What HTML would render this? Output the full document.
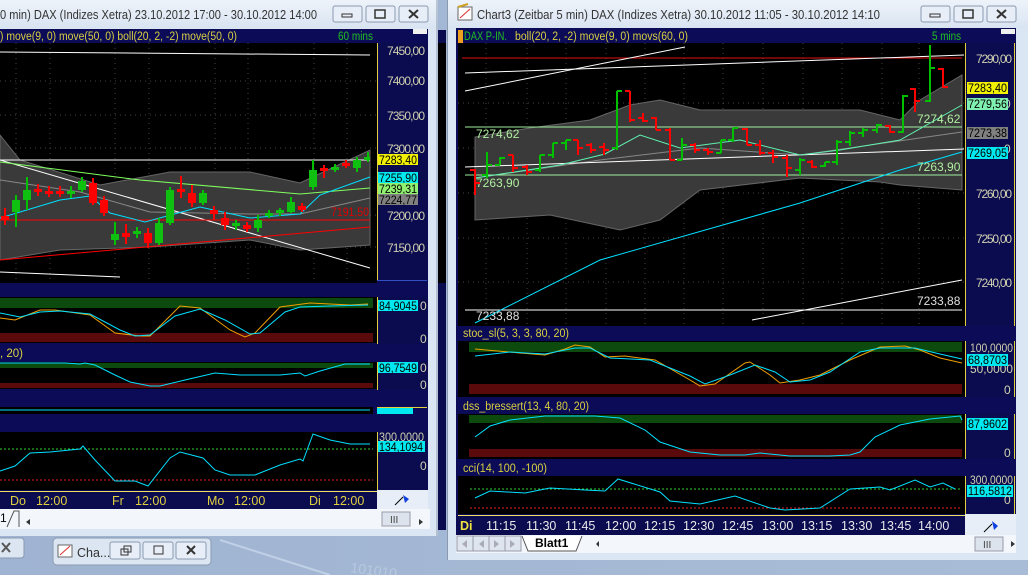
<!DOCTYPE html>
<html><head><meta charset="utf-8"><style>
body{margin:0;width:1028px;height:575px;overflow:hidden;background:#a3b8d5}
svg{display:block}
text{font-family:"Liberation Sans",sans-serif}
</style></head><body>
<svg width="1028" height="575" viewBox="0 0 1028 575" xmlns="http://www.w3.org/2000/svg">
<defs>
<linearGradient id="tb" x1="0" y1="0" x2="0" y2="1"><stop offset="0" stop-color="#eef3fa"/><stop offset="1" stop-color="#d9e4f2"/></linearGradient>
<linearGradient id="desk" x1="0" y1="0" x2="1" y2="0"><stop offset="0" stop-color="#9fb4d2"/><stop offset="1" stop-color="#a9bcd7"/></linearGradient>
</defs>
<rect x="0" y="0" width="1028" height="575" fill="url(#desk)"/>
<path d="M220 540 L330 575" stroke="#c0d0e6" stroke-width="2"/>
<text x="350" y="572" font-size="14" fill="#b8c8df" transform="rotate(8 350 572)">101010</text>

<!-- LEFT WINDOW -->
<rect x="0" y="0" width="438" height="536" fill="#dbe6f4"/>
<rect x="0" y="0" width="438" height="28" fill="url(#tb)"/>
<text x="0" y="19" font-size="12.5" fill="#333" textLength="317" lengthAdjust="spacingAndGlyphs">0 min)  DAX (Indizes Xetra) 23.10.2012 17:00 - 30.10.2012 14:00</text>
<g fill="#e8eef7" stroke="#8a9ab0">
<rect x="333" y="6" width="29" height="16" rx="2"/><rect x="366" y="6" width="29" height="16" rx="2"/><rect x="399" y="6" width="29" height="16" rx="2"/></g>
<rect x="342" y="14" width="10" height="3" fill="none" stroke="#333"/>
<rect x="375" y="10" width="10" height="8" fill="none" stroke="#333" stroke-width="1.5"/>
<path d="M409 10 L418 18 M418 10 L409 18" stroke="#333" stroke-width="2"/>
<line x1="437" y1="0" x2="437" y2="536" stroke="#8a9ab0"/>

<rect x="0" y="29" width="428" height="480" fill="#0b0b58"/>
<text x="0" y="40" font-size="11.5" fill="#d8d040" textLength="237" lengthAdjust="spacingAndGlyphs">) move(9, 0) move(50, 0) boll(20, 2, -2) move(50, 0)</text>
<text x="338" y="40" font-size="11.5" fill="#20c020" textLength="35" lengthAdjust="spacingAndGlyphs">60 mins</text>
<rect x="413" y="29" width="14" height="5" fill="#f0f0f0"/>
<rect x="0" y="43" width="377" height="240" fill="#000"/>
<g stroke="#444" stroke-dasharray="1,4">
<line x1="16" y1="43" x2="16" y2="283"/><line x1="50" y1="43" x2="50" y2="283"/><line x1="115" y1="43" x2="115" y2="283"/><line x1="149" y1="43" x2="149" y2="283"/><line x1="215" y1="43" x2="215" y2="283"/><line x1="248" y1="43" x2="248" y2="283"/><line x1="314" y1="43" x2="314" y2="283"/><line x1="347" y1="43" x2="347" y2="283"/>
<line x1="0" y1="81" x2="377" y2="81"/><line x1="0" y1="115" x2="377" y2="115"/><line x1="0" y1="148" x2="377" y2="148"/><line x1="0" y1="215" x2="377" y2="215"/><line x1="0" y1="247" x2="377" y2="247"/>
</g>
<path d="M0 135 L20 160 L100 185 L170 172 L250 172 L300 183 L370 150 L370 245 L300 250 L250 240 L150 247 L60 250 L0 260Z" fill="#3a3a3a" stroke="#666"/>
<polyline points="0,180 80,192 150,212 250,214 300,214 370,198" fill="none" stroke="#888"/>
<line x1="0" y1="52" x2="370" y2="55" stroke="#fff"/>
<line x1="0" y1="160" x2="370" y2="160" stroke="#fff"/>
<line x1="0" y1="160" x2="370" y2="268" stroke="#fff"/>
<line x1="0" y1="272" x2="120" y2="277" stroke="#fff"/>
<line x1="0" y1="220" x2="370" y2="220" stroke="#f00"/>
<line x1="0" y1="260" x2="370" y2="227" stroke="#f00"/>
<polyline points="0,162 140,180 300,194 370,188" fill="none" stroke="#80ff60"/>
<polyline points="0,218 60,200 90,196 110,213 145,222 200,207 250,218 300,214 320,195 370,177" fill="none" stroke="#00e0ff"/>
<text x="331" y="216" font-size="12" fill="#e00000" textLength="38" lengthAdjust="spacingAndGlyphs">7191,50</text>
<g stroke-width="2">
<g stroke="#f00"><line x1="5" y1="208" x2="5" y2="225"/><line x1="38" y1="184" x2="38" y2="196"/><line x1="49" y1="186" x2="49" y2="197"/><line x1="60" y1="186" x2="60" y2="197"/><line x1="93" y1="178" x2="93" y2="205"/><line x1="104" y1="196" x2="104" y2="216"/><line x1="126" y1="224" x2="126" y2="244"/><line x1="148" y1="228" x2="148" y2="248"/><line x1="181" y1="176" x2="181" y2="198"/><line x1="192" y1="185" x2="192" y2="207"/><line x1="214" y1="206" x2="214" y2="220"/><line x1="225" y1="212" x2="225" y2="230"/><line x1="247" y1="222" x2="247" y2="232"/><line x1="302" y1="203" x2="302" y2="212"/><line x1="324" y1="165" x2="324" y2="178"/><line x1="346" y1="160" x2="346" y2="168"/></g>
<g stroke="#00c000"><line x1="16" y1="195" x2="16" y2="227"/><line x1="27" y1="177" x2="27" y2="210"/><line x1="71" y1="186" x2="71" y2="198"/><line x1="82" y1="177" x2="82" y2="192"/><line x1="115" y1="222" x2="115" y2="245"/><line x1="137" y1="227" x2="137" y2="238"/><line x1="159" y1="218" x2="159" y2="245"/><line x1="170" y1="187" x2="170" y2="225"/><line x1="203" y1="190" x2="203" y2="205"/><line x1="236" y1="220" x2="236" y2="230"/><line x1="258" y1="215" x2="258" y2="232"/><line x1="269" y1="210" x2="269" y2="218"/><line x1="280" y1="208" x2="280" y2="216"/><line x1="291" y1="197" x2="291" y2="213"/><line x1="313" y1="160" x2="313" y2="190"/><line x1="335" y1="164" x2="335" y2="172"/><line x1="357" y1="157" x2="357" y2="172"/><line x1="368" y1="152" x2="368" y2="162"/></g>
</g>
<g fill="#f00"><rect x="1" y="216" width="8" height="4"/><rect x="34" y="189" width="8" height="3"/><rect x="45" y="191" width="8" height="3"/><rect x="56" y="191" width="8" height="3"/><rect x="89" y="183" width="8" height="20"/><rect x="100" y="200" width="8" height="13"/><rect x="122" y="233" width="8" height="4"/><rect x="144" y="233" width="8" height="10"/><rect x="177" y="189" width="8" height="3"/><rect x="188" y="193" width="8" height="10"/><rect x="210" y="210" width="8" height="4"/><rect x="221" y="218" width="8" height="7"/><rect x="243" y="225" width="8" height="4"/><rect x="298" y="206" width="8" height="4"/><rect x="320" y="168" width="8" height="3"/><rect x="342" y="163" width="8" height="3"/></g>
<g fill="#10c010"><rect x="12" y="200" width="8" height="12"/><rect x="23" y="190" width="8" height="10"/><rect x="67" y="191" width="8" height="3"/><rect x="78" y="181" width="8" height="9"/><rect x="111" y="234" width="8" height="6"/><rect x="133" y="231" width="8" height="3"/><rect x="155" y="223" width="8" height="20"/><rect x="166" y="190" width="8" height="33"/><rect x="199" y="193" width="8" height="10"/><rect x="232" y="223" width="8" height="3"/><rect x="254" y="220" width="8" height="8"/><rect x="265" y="213" width="8" height="3"/><rect x="276" y="210" width="8" height="3"/><rect x="287" y="202" width="8" height="10"/><rect x="309" y="170" width="8" height="17"/><rect x="331" y="167" width="8" height="3"/><rect x="353" y="160" width="8" height="8"/><rect x="364" y="157" width="6" height="3"/></g>

<!-- left axis -->
<rect x="377" y="43" width="50" height="237" fill="#0b0b50"/>
<line x1="377.5" y1="43" x2="377.5" y2="280" stroke="#e0d040"/>
<line x1="377" y1="280.5" x2="427" y2="280.5" stroke="#3050c0"/>
<g font-size="12" fill="#d0d0b0" lengthAdjust="spacingAndGlyphs"><text x="387" y="55" textLength="38">7450,00</text><text x="387" y="85" textLength="38">7400,00</text><text x="387" y="120" textLength="38">7350,00</text><text x="387" y="153" textLength="38">7300,00</text><text x="387" y="220" textLength="38">7200,00</text><text x="387" y="252" textLength="38">7150,00</text></g>
<rect x="378" y="154" width="40" height="11" fill="#f0f000"/><text x="379" y="164" font-size="12" fill="#000" textLength="38" lengthAdjust="spacingAndGlyphs">7283,40</text>
<rect x="378" y="172" width="40" height="11" fill="#00e8f0"/><text x="379" y="182" font-size="12" fill="#000" textLength="38" lengthAdjust="spacingAndGlyphs">7255,90</text>
<rect x="378" y="183" width="40" height="11" fill="#90f070"/><text x="379" y="193" font-size="12" fill="#000" textLength="38" lengthAdjust="spacingAndGlyphs">7239,31</text>
<rect x="378" y="194" width="40" height="11" fill="#808080"/><text x="379" y="204" font-size="12" fill="#000" textLength="38" lengthAdjust="spacingAndGlyphs">7224,77</text>

<!-- left stoc -->
<rect x="0" y="297" width="377" height="46" fill="#000"/>
<rect x="0" y="298" width="373" height="10" fill="#0d4a0d"/>
<rect x="0" y="333" width="373" height="9" fill="#5a0a0a"/>
<polyline points="0,318 15,320 40,310 55,310 90,315 115,333 140,336 150,336 180,306 200,308 230,330 245,337 255,333 280,307 310,303 350,305 368,304" fill="none" stroke="#f0a000"/>
<polyline points="0,313 20,317 40,312 60,311 90,314 120,330 135,336 150,335 175,316 200,309 225,320 250,334 260,333 285,312 300,307 330,306 368,305" fill="none" stroke="#00e0ff"/>
<rect x="377" y="297" width="50" height="47" fill="#0b0b50"/><line x1="377.5" y1="297" x2="377.5" y2="344" stroke="#e0d040"/>
<rect x="378" y="300" width="40" height="11" fill="#00e8f0"/><text x="379" y="310" font-size="12" fill="#000" textLength="38" lengthAdjust="spacingAndGlyphs">84,9045</text>
<text x="420" y="310" font-size="12" fill="#d0d0b0">0</text><text x="420" y="343" font-size="12" fill="#d0d0b0">0</text>
<text x="0" y="357" font-size="11.5" fill="#d8d040">, 20)</text>
<!-- left dss -->
<rect x="0" y="362" width="377" height="27" fill="#000"/>
<rect x="0" y="363" width="373" height="5" fill="#0d4a0d"/>
<rect x="0" y="383" width="373" height="5" fill="#5a0a0a"/>
<polyline points="0,363 65,363 80,364 85,363 95,365 115,375 130,382 150,386 160,386 185,380 215,373 240,375 280,375 300,373 305,376 320,371 345,364 370,364" fill="none" stroke="#00e0ff"/>
<rect x="377" y="362" width="50" height="28" fill="#0b0b50"/><line x1="377.5" y1="362" x2="377.5" y2="390" stroke="#e0d040"/>
<rect x="378" y="362" width="40" height="11" fill="#00e8f0"/><text x="379" y="372" font-size="12" fill="#000" textLength="38" lengthAdjust="spacingAndGlyphs">96,7549</text>
<text x="420" y="372" font-size="12" fill="#d0d0b0">0</text><text x="420" y="389" font-size="12" fill="#d0d0b0">0</text>
<!-- tiny -->
<rect x="0" y="407" width="373" height="7" fill="#000"/>
<line x1="0" y1="410" x2="370" y2="410" stroke="#00e0ff"/>
<rect x="377" y="407" width="36" height="7" fill="#00e8f0"/>
<line x1="377" y1="407.5" x2="427" y2="407.5" stroke="#e0d040"/>
<!-- cci -->
<rect x="0" y="432" width="377" height="58" fill="#000"/>
<line x1="0" y1="449" x2="373" y2="449" stroke="#30d030" stroke-dasharray="2,2"/>
<line x1="0" y1="480" x2="373" y2="480" stroke="#e02020" stroke-dasharray="2,2"/>
<polyline points="0,471 15,466 30,453 50,452 80,449 83,446 95,460 115,481 135,481 148,486 170,458 180,452 203,458 215,470 230,475 255,475 280,465 300,459 303,461 313,434 330,440 350,444 370,444" fill="none" stroke="#00e0ff"/>
<rect x="377" y="432" width="50" height="58" fill="#0b0b50"/><line x1="377.5" y1="432" x2="377.5" y2="490" stroke="#e0d040"/>
<text x="379" y="441" font-size="12" fill="#d0d0b0" textLength="45" lengthAdjust="spacingAndGlyphs">300,0000</text>
<rect x="378" y="441" width="47" height="11" fill="#00e8f0"/><text x="379" y="451" font-size="12" fill="#000" textLength="44" lengthAdjust="spacingAndGlyphs">134,1094</text>
<text x="420" y="470" font-size="12" fill="#d0d0b0">0</text>
<!-- time -->
<rect x="0" y="490" width="377" height="19" fill="#0b0b50"/>
<line x1="0" y1="491.5" x2="377" y2="491.5" stroke="#f0e060"/>
<g font-size="12.5" fill="#e0d040"><text x="10" y="505">Do</text><text x="36" y="505">12:00</text><text x="112" y="505">Fr</text><text x="135" y="505">12:00</text><text x="207" y="505">Mo</text><text x="234" y="505">12:00</text><text x="309" y="505">Di</text><text x="333" y="505">12:00</text></g>
<rect x="377" y="490" width="51" height="19" fill="#e8eef7"/>
<path d="M395 505 L403 497" stroke="#000"/><path d="M403 495 L409 499 L405 503Z" fill="#1040e0"/>
<rect x="0" y="509" width="430" height="20" fill="#f3f6fb"/>
<text x="0" y="522" font-size="12" fill="#000">1</text><path d="M7 527 L14 511 L19 511 L19 527" fill="none" stroke="#555"/>
<path d="M30 519 L26 522 L30 525Z" fill="#333"/>
<rect x="382" y="512" width="28" height="14" fill="#dde3ec" stroke="#99a"/><text x="390" y="523" font-size="10" fill="#444">III</text>
<path d="M419 519 L423 522 L419 525Z" fill="#333"/>

<!-- strip between windows -->
<rect x="438" y="30" width="8" height="510" fill="#0b0b50"/>
<rect x="438" y="43" width="8" height="240" fill="#000"/>
<rect x="438" y="530" width="8" height="45" fill="#a3b8d5"/>
<!-- minimized windows -->
<rect x="-5" y="538" width="29" height="20" rx="3" fill="#dce6f3" stroke="#8a9ab0"/>
<path d="M2 543 L10 552 M10 543 L2 552" stroke="#555" stroke-width="2"/>
<rect x="53" y="538" width="158" height="27" rx="4" fill="#dce6f3" stroke="#8a9ab0"/>
<rect x="58" y="545" width="14" height="12" fill="#fff" stroke="#666"/><path d="M60 555 L70 546" stroke="#e03030"/>
<text x="77" y="557" font-size="12.5" fill="#333">Cha...</text>
<g fill="#e8eef7" stroke="#8a9ab0"><rect x="110" y="542" width="30" height="17" rx="2"/><rect x="143" y="542" width="30" height="17" rx="2"/><rect x="176" y="542" width="30" height="17" rx="2"/></g>
<rect x="121" y="549" width="7" height="6" fill="none" stroke="#333"/><rect x="124" y="546" width="7" height="6" fill="none" stroke="#333"/>
<rect x="154" y="546" width="9" height="8" fill="none" stroke="#333"/>
<path d="M187 546 L195 554 M195 546 L187 554" stroke="#333" stroke-width="2"/>

<!-- RIGHT WINDOW -->
<rect x="447" y="0" width="581" height="560" fill="#dbe6f4"/>
<rect x="447" y="0" width="581" height="28" fill="url(#tb)"/>
<line x1="447.5" y1="0" x2="447.5" y2="560" stroke="#8a9ab0"/>
<rect x="458" y="7" width="14" height="13" fill="#fff" stroke="#666"/><path d="M460 18 L470 9" stroke="#e03030"/><path d="M458 7 L468 4" stroke="#d0a020" stroke-width="2"/>
<text x="477" y="19" font-size="12.5" fill="#333" textLength="403" lengthAdjust="spacingAndGlyphs">Chart3 (Zeitbar 5 min)  DAX (Indizes Xetra) 30.10.2012 11:05 - 30.10.2012 14:10</text>
<g fill="#e8eef7" stroke="#8a9ab0"><rect x="921" y="6" width="29" height="16" rx="2"/><rect x="954" y="6" width="29" height="16" rx="2"/><rect x="987" y="6" width="29" height="16" rx="2"/></g>
<rect x="930" y="14" width="10" height="3" fill="none" stroke="#333"/>
<rect x="963" y="10" width="10" height="8" fill="none" stroke="#333" stroke-width="1.5"/>
<path d="M997 10 L1006 18 M1006 10 L997 18" stroke="#333" stroke-width="2"/>

<rect x="456" y="28" width="560" height="507" fill="#0b0b58"/>
<rect x="458" y="30" width="5" height="13" fill="#f0a020"/>
<text x="464" y="40" font-size="11.5" fill="#20c020" textLength="43" lengthAdjust="spacingAndGlyphs">DAX P-IN.</text>
<text x="515" y="40" font-size="11.5" fill="#d8d040" textLength="173" lengthAdjust="spacingAndGlyphs">boll(20, 2, -2) move(9, 0) movs(60, 0)</text>
<text x="932" y="40" font-size="11.5" fill="#20c020" textLength="29" lengthAdjust="spacingAndGlyphs">5 mins</text>
<rect x="1001" y="29" width="14" height="5" fill="#f0f0f0"/>
<rect x="458" y="43" width="507" height="283" fill="#000"/>
<g stroke="#444" stroke-dasharray="1,4">
<line x1="486" y1="43" x2="486" y2="326"/><line x1="527" y1="43" x2="527" y2="326"/><line x1="566" y1="43" x2="566" y2="326"/><line x1="606" y1="43" x2="606" y2="326"/><line x1="645" y1="43" x2="645" y2="326"/><line x1="684" y1="43" x2="684" y2="326"/><line x1="723" y1="43" x2="723" y2="326"/><line x1="763" y1="43" x2="763" y2="326"/><line x1="803" y1="43" x2="803" y2="326"/><line x1="842" y1="43" x2="842" y2="326"/><line x1="882" y1="43" x2="882" y2="326"/><line x1="919" y1="43" x2="919" y2="326"/>
<line x1="458" y1="103" x2="965" y2="103"/><line x1="458" y1="148" x2="965" y2="148"/><line x1="458" y1="193" x2="965" y2="193"/><line x1="458" y1="238" x2="965" y2="238"/><line x1="458" y1="282" x2="965" y2="282"/>
</g>
<path d="M475 137 L530 128 L590 120 L630 105 L660 100 L700 110 L860 110 L900 120 L920 100 L962 75 L962 190 L900 185 L880 182 L800 178 L700 190 L660 220 L620 230 L550 215 L475 220Z" fill="#3a3a3a" stroke="#666"/>
<polyline points="475,178 600,160 700,148 800,155 962,132" fill="none" stroke="#888"/>
<line x1="462" y1="58" x2="962" y2="58" stroke="#e01010"/>
<line x1="465" y1="91" x2="685" y2="47" stroke="#fff"/>
<line x1="465" y1="73" x2="964" y2="55" stroke="#fff"/>
<line x1="465" y1="167" x2="964" y2="149" stroke="#fff"/>
<line x1="752" y1="320" x2="962" y2="280" stroke="#fff"/>
<line x1="465" y1="127" x2="962" y2="127" stroke="#a0f0a0"/>
<line x1="465" y1="175" x2="962" y2="175" stroke="#a0f0a0"/>
<line x1="465" y1="310" x2="962" y2="310" stroke="#fff"/>
<polyline points="475,323 600,260 800,203 900,170 962,152" fill="none" stroke="#00e0ff"/>
<polyline points="475,178 560,165 605,154 640,135 680,148 740,140 800,155 840,150 900,140 962,105" fill="none" stroke="#60f0b0"/>
<g font-size="12" fill="#b0f0a0"><text x="476" y="138">7274,62</text><text x="476" y="187">7263,90</text><text x="917" y="123">7274,62</text><text x="917" y="171">7263,90</text></g>
<g font-size="12" fill="#e0e0e0"><text x="476" y="320">7233,88</text><text x="917" y="305">7233,88</text></g>
<g stroke-width="2" fill="none">
<g stroke="#f00">
<path d="M475 169V195M470 170H475M475 183H480"/><path d="M513 155V172M508 155H513M513 168H518"/><path d="M527 165V175M522 167H527M527 172H532"/><path d="M578 140V155M573 140H578M578 148H583"/><path d="M591 143V153M586 145H591M591 150H596"/><path d="M604 143V155M599 147H604M604 150H609"/><path d="M630 91V122M625 91H630M630 120H635"/><path d="M643 113V122M638 118H643M643 121H648"/><path d="M656 117V130M651 118H656M656 130H661"/><path d="M670 128V160M665 130H670M670 160H675"/><path d="M695 143V153M690 145H695M695 150H700"/><path d="M708 148V155M703 150H708M708 152H713"/><path d="M747 128V145M742 129H747M747 145H752"/><path d="M760 140V155M755 145H760M760 153H765"/><path d="M773 150V163M768 153H773M773 157H778"/><path d="M787 155V177M782 158H787M787 168H792"/><path d="M812 160V168M807 162H812M812 167H817"/><path d="M890 125V133M885 126H890M890 132H895"/><path d="M915 88V112M910 89H915M915 101H920"/><path d="M943 68V88M938 69H943M943 87H948"/>
</g>
<g stroke="#00c000">
<path d="M487 152V178M482 175H487M487 165H492"/><path d="M500 157V165M495 165H500M500 158H505"/><path d="M540 155V172M535 170H540M540 155H545"/><path d="M553 143V158M548 155H553M553 143H558"/><path d="M566 140V150M561 143H566M566 140H571"/><path d="M617 91V150M612 148H617M617 91H622"/><path d="M682 138V160M677 160H682M682 145H687"/><path d="M721 140V153M716 153H721M721 140H726"/><path d="M733 128V142M728 140H733M733 128H738"/><path d="M800 158V175M795 170H800M800 160H805"/><path d="M825 162V167M820 166H825M825 162H830"/><path d="M837 140V165M832 162H837M837 142H842"/><path d="M850 131V146M845 142H850M850 133H855"/><path d="M863 128V137M858 133H863M863 130H868"/><path d="M877 124V133M872 130H877M877 125H882"/><path d="M903 95V133M898 132H903M903 96H908"/><path d="M930 45V102M925 101H930M930 68H935"/>
</g></g>
<!-- right axis -->
<rect x="965" y="43" width="50" height="283" fill="#0b0b50"/>
<line x1="965.5" y1="43" x2="965.5" y2="326" stroke="#e0d040"/>
<line x1="1014.5" y1="43" x2="1014.5" y2="326" stroke="#e0d040"/>
<g font-size="12" fill="#d0d0b0" lengthAdjust="spacingAndGlyphs"><text x="976" y="63" textLength="36">7290,00</text><text x="976" y="198" textLength="36">7260,00</text><text x="976" y="243" textLength="36">7250,00</text><text x="976" y="287" textLength="36">7240,00</text><text x="1004" y="108">0</text><text x="1004" y="153">0</text></g>
<rect x="967" y="82" width="41" height="12" fill="#f0f000"/><text x="968" y="92" font-size="12" fill="#000" textLength="39" lengthAdjust="spacingAndGlyphs">7283,40</text>
<rect x="967" y="98" width="41" height="12" fill="#80f0b0"/><text x="968" y="108" font-size="12" fill="#000" textLength="39" lengthAdjust="spacingAndGlyphs">7279,56</text>
<rect x="967" y="127" width="41" height="12" fill="#808080"/><text x="968" y="137" font-size="12" fill="#000" textLength="39" lengthAdjust="spacingAndGlyphs">7273,38</text>
<rect x="967" y="147" width="41" height="12" fill="#00e8f0"/><text x="968" y="157" font-size="12" fill="#000" textLength="39" lengthAdjust="spacingAndGlyphs">7269,05</text>

<!-- right subpanes -->
<text x="463" y="337" font-size="11.5" fill="#d8d040" textLength="106" lengthAdjust="spacingAndGlyphs">stoc_sl(5, 3, 3, 80, 20)</text>
<rect x="458" y="341" width="507" height="56" fill="#000"/>
<rect x="469" y="342" width="493" height="10" fill="#0d4a0d"/>
<rect x="469" y="384" width="493" height="10" fill="#5a0a0a"/>
<polyline points="475,349 520,353 545,355 565,349 575,345 590,347 605,357 625,356 655,360 690,380 700,386 715,384 745,363 750,362 770,375 780,383 800,380 820,375 850,360 880,347 905,346 920,350 940,358 962,363" fill="none" stroke="#f0a000"/>
<polyline points="475,356 510,352 545,354 575,348 590,348 610,358 650,360 690,376 705,384 730,375 755,365 775,372 790,382 810,380 830,372 860,352 880,348 915,348 940,354 962,359" fill="none" stroke="#00e0ff"/>
<rect x="965" y="341" width="50" height="56" fill="#0b0b50"/>
<line x1="965.5" y1="341" x2="965.5" y2="397" stroke="#e0d040"/><line x1="1014.5" y1="341" x2="1014.5" y2="397" stroke="#e0d040"/>
<text x="970" y="352" font-size="12" fill="#d0d0b0" textLength="43" lengthAdjust="spacingAndGlyphs">100,0000</text>
<text x="970" y="373" font-size="12" fill="#d0d0b0" textLength="43" lengthAdjust="spacingAndGlyphs">50,0000</text>
<rect x="967" y="354" width="41" height="12" fill="#00e8f0"/><text x="968" y="364" font-size="12" fill="#000" textLength="39" lengthAdjust="spacingAndGlyphs">68,8703</text>
<text x="1004" y="394" font-size="12" fill="#d0d0b0">0</text>

<text x="463" y="410" font-size="11.5" fill="#d8d040" textLength="126" lengthAdjust="spacingAndGlyphs">dss_bressert(13, 4, 80, 20)</text>
<rect x="458" y="414" width="507" height="45" fill="#000"/>
<rect x="469" y="415" width="493" height="8" fill="#0d4a0d"/>
<rect x="469" y="449" width="493" height="8" fill="#5a0a0a"/>
<polyline points="475,437 490,426 510,420 545,416 595,416 620,418 645,430 660,442 690,452 720,455 745,455 760,453 790,456 830,456 850,455 860,452 875,437 900,425 930,419 960,416 962,420" fill="none" stroke="#00e0ff"/>
<rect x="965" y="414" width="50" height="45" fill="#0b0b50"/>
<line x1="965.5" y1="414" x2="965.5" y2="459" stroke="#e0d040"/><line x1="1014.5" y1="414" x2="1014.5" y2="459" stroke="#e0d040"/>
<rect x="967" y="418" width="41" height="12" fill="#00e8f0"/><text x="968" y="428" font-size="12" fill="#000" textLength="39" lengthAdjust="spacingAndGlyphs">87,9602</text>
<text x="1004" y="457" font-size="12" fill="#d0d0b0">0</text>

<text x="463" y="472" font-size="11.5" fill="#d8d040" textLength="84" lengthAdjust="spacingAndGlyphs">cci(14, 100, -100)</text>
<rect x="458" y="476" width="507" height="38" fill="#000"/>
<line x1="470" y1="489" x2="962" y2="489" stroke="#30d030" stroke-dasharray="2,2"/>
<line x1="470" y1="508" x2="962" y2="508" stroke="#e02020" stroke-dasharray="2,2"/>
<polyline points="475,498 490,491 525,493 550,488 585,490 605,491 618,479 660,492 670,501 700,504 735,496 770,508 785,510 820,508 850,489 880,487 890,490 915,480 930,487 943,483 955,489" fill="none" stroke="#00e0ff"/>
<rect x="965" y="476" width="50" height="38" fill="#0b0b50"/>
<line x1="965.5" y1="476" x2="965.5" y2="514" stroke="#e0d040"/><line x1="1014.5" y1="476" x2="1014.5" y2="514" stroke="#e0d040"/>
<text x="970" y="484" font-size="12" fill="#d0d0b0" textLength="43" lengthAdjust="spacingAndGlyphs">300,0000</text>
<rect x="967" y="485" width="46" height="12" fill="#00e8f0"/><text x="968" y="495" font-size="12" fill="#000" textLength="44" lengthAdjust="spacingAndGlyphs">116,5812</text>
<text x="1004" y="504" font-size="12" fill="#d0d0b0">0</text>

<rect x="458" y="514" width="507" height="21" fill="#0b0b50"/>
<line x1="458" y1="515.5" x2="965" y2="515.5" stroke="#f0e060"/>
<text x="460" y="530" font-size="12.5" font-weight="bold" fill="#f0e040">Di</text>
<g font-size="12.5" fill="#e8e8e8"><text x="486" y="530">11:15</text><text x="526" y="530">11:30</text><text x="565" y="530">11:45</text><text x="605" y="530">12:00</text><text x="644" y="530">12:15</text><text x="683" y="530">12:30</text><text x="722" y="530">12:45</text><text x="762" y="530">13:00</text><text x="801" y="530">13:15</text><text x="841" y="530">13:30</text><text x="880" y="530">13:45</text><text x="918" y="530">14:00</text></g>
<rect x="965" y="514" width="51" height="21" fill="#e8eef7"/>
<path d="M984 532 L992 524" stroke="#000"/><path d="M992 521 L998 526 L994 530Z" fill="#1040e0"/>
<rect x="456" y="535" width="560" height="18" fill="#f3f6fb"/>
<g fill="#dfe5ee" stroke="#99a"><rect x="457" y="536" width="16" height="15"/><rect x="473" y="536" width="16" height="15"/><rect x="489" y="536" width="16" height="15"/><rect x="505" y="536" width="16" height="15"/></g>
<g fill="#aab"><path d="M467 540 L462 544 L467 548Z"/><path d="M484 540 L479 544 L484 548Z"/><path d="M494 540 L499 544 L494 548Z"/><path d="M510 540 L515 544 L510 548Z"/></g>
<path d="M522 536 L528 551 L576 551 L582 536" fill="#fff" stroke="#555"/>
<text x="535" y="547" font-size="12" font-weight="bold" fill="#000">Blatt1</text>
<path d="M599 541 L596 544 L599 547Z" fill="#333"/>
<rect x="975" y="537" width="28" height="14" fill="#dde3ec" stroke="#99a"/><text x="983" y="548" font-size="10" fill="#444">III</text>
<path d="M1011 541 L1015 544 L1011 547Z" fill="#333"/>
</svg>
</body></html>
